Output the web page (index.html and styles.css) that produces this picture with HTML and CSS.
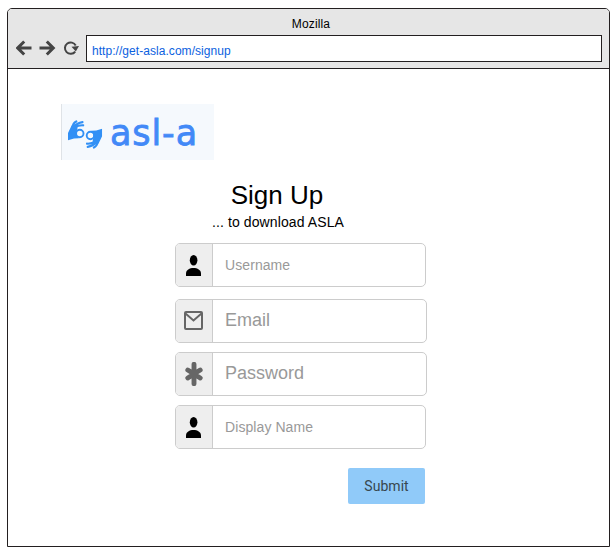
FILE: index.html
```html
<!DOCTYPE html>
<html lang="en">
<head>
<meta charset="utf-8">
<title>Sign Up</title>
<link rel="stylesheet" href="styles.css">
</head>
<body>
<svg class="defs" width="0" height="0">
  <symbol id="user" viewBox="0 0 15 21">
    <ellipse cx="7.600" cy="5.300" rx="3.800" ry="5.300"/>
    <path d="M0 21v-2.600C0 14.900 3.600 13 7.500 13s7.500 1.900 7.500 5.400V21z"/>
  </symbol>
  <symbol id="hand" viewBox="0 0 18 22">
    <path fill="currentColor" d="M0 21.300V14L3.600 6.500L8.500 6.500L9.500 9.500L8.800 12V16.500L11 19.300L6 19.600Z"/>
    <g fill="none" stroke="currentColor" stroke-linecap="round">
      <path stroke-width="2.200" d="M4.500 8.500Q5 4 8.300 2.500M6 8Q9 4 14.500 3.200M7 9Q10 6 15.200 6.300"/>
      <circle stroke-width="1.900" cx="11.800" cy="14.500" r="3.700"/>
    </g>
  </symbol>
</svg>
<div class="window">
  <header class="chrome">
    <div class="title">Mozilla</div>
    <div class="toolbar">
      <svg class="nav" width="64" height="16" viewBox="0 0 64 16">
        <path d="M15.500 8H2M8.200 1.500L1.700 8l6.500 6.500M23.500 8H37M30.800 1.500L37.300 8l-6.500 6.500" stroke-width="3"/>
        <path d="M59.200 11.600A5.700 5.700 0 1 1 59.700 5.500" stroke-width="2"/>
        <path class="tip" d="M55.500 6.800l7.500-.8-3.200 5.400z"/>
      </svg>
      <div class="url">http://get-asla.com/signup</div>
    </div>
  </header>
  <main class="page">
    <div class="logo">
      <svg class="hands" width="35" height="32" viewBox="0 0 35 32">
        <use href="#hand" width="18" height="22"/>
        <use href="#hand" width="18" height="22" transform="rotate(180 17.100 15.500)"/>
      </svg>
      <span class="brand">asl-a</span>
    </div>
    <form class="signup">
      <h1>Sign Up</h1>
      <p class="lead">... to download ASLA</p>
      <div class="field first">
        <span class="addon"><svg width="15" height="21"><use href="#user"/></svg></span>
        <span class="hint">Username</span>
      </div>
      <div class="field large email">
        <span class="addon gray"><svg width="19" height="19" viewBox="0 0 19 19"><rect x="1" y="1" width="17" height="17" rx="1" fill="none" stroke="currentColor" stroke-width="2"/><path d="M1.500 2.500L9.500 9.500l8-7" fill="none" stroke="currentColor" stroke-width="2"/></svg></span>
        <span class="hint">Email</span>
      </div>
      <div class="field large">
        <span class="addon gray"><svg width="18" height="24" viewBox="0 0 18 24"><path d="M9 2.300v19.400M2.800 8l12.400 8M15.200 8L2.800 16" stroke="currentColor" stroke-width="4.900" stroke-linecap="round"/></svg></span>
        <span class="hint">Password</span>
      </div>
      <div class="field">
        <span class="addon"><svg width="15" height="21"><use href="#user"/></svg></span>
        <span class="hint">Display Name</span>
      </div>
      <button class="submit" type="button">Submit</button>
    </form>
  </main>
</div>
</body>
</html>
```
FILE: styles.css
```css
* { box-sizing: border-box; }
body {
  margin: 0;
  padding: 8px 0 0 7px;
  background: #fff;
  font-family: "Liberation Sans", Arial, sans-serif;
  overflow: hidden;
}
svg { display: block; }
.defs { height: 0; }
.window {
  width: 603px;
  height: 539px;
  border: 1px solid #231f20;
  border-radius: 5px 5px 0 0;
  overflow: hidden;
}
.chrome {
  height: 60px;
  background: #e6e6e6;
  border-bottom: 1px solid #231f20;
}
.title {
  height: 26px;
  padding-top: 7px;
  padding-left: 5px;
  font-size: 12px;
  line-height: 16px;
  text-align: center;
  color: #000;
  letter-spacing: .15px;
}
.toolbar { display: flex; padding: 0 7px 0 8px; }
.nav {
  width: 64px;
  margin: 5px 6px 0 0;
  fill: none;
  stroke: #444;
}
.nav .tip { fill: #444; stroke: none; }
.url {
  flex: 1;
  height: 27px;
  padding: 2px 0 0 5px;
  border: 1px solid #231f20;
  background: #fff;
  color: #0b61e0;
  font-size: 12px;
  line-height: 26px;
  letter-spacing: .05px;
}
.page { padding: 35px 0 0 53px; }
.logo {
  display: flex;
  width: 153px;
  height: 56px;
  padding-left: 6px;
  background: #f5f9fd;
  border-left: 1px solid #dfe3e7;
}
.hands { margin-top: 15px; color: #3290f5; }
.brand {
  margin-left: 7px;
  color: #4289f7;
  font: 35px/58px "DejaVu Sans", sans-serif;
  letter-spacing: .9px;
  -webkit-text-stroke: .8px #4289f7;
}
.signup {
  display: flex;
  flex-direction: column;
  width: 252px;
  margin: 20px 0 0 114px;
}
h1 {
  width: 204px;
  margin: 0;
  font-size: 26px;
  font-weight: 400;
  line-height: 30px;
  text-align: center;
}
.lead {
  width: 206px;
  margin: 4px 0 0;
  font-size: 14px;
  line-height: 16px;
  letter-spacing: .1px;
  text-align: center;
}
.field {
  display: flex;
  width: 251px;
  height: 44px;
  margin-top: 9px;
  border: 1px solid #ccc;
  border-radius: 5px;
  overflow: hidden;
  color: #999;
  font-size: 14px;
  line-height: 42px;
  letter-spacing: .08px;
}
.first { margin-top: 13px; }
.email { margin-top: 12px; }
.large { width: 252px; font-size: 18px; line-height: 40px; letter-spacing: 0; }
.addon {
  display: flex;
  align-items: center;
  justify-content: center;
  width: 37px;
  padding: 1px 1px 0 0;
  background: #eee;
  border-right: 1px solid #ccc;
  color: #000;
}
.gray { color: #666; padding: 0 1px 1px 0; }
.hint { padding-left: 12px; }
.submit {
  width: 77px;
  height: 36px;
  margin: 19px 0 0 173px;
  padding: 0;
  border: 0;
  border-radius: 2px;
  background: #90caf9;
  color: #37474f;
  font: 14px/34px Roboto, sans-serif;
  letter-spacing: .05px;
}
```
